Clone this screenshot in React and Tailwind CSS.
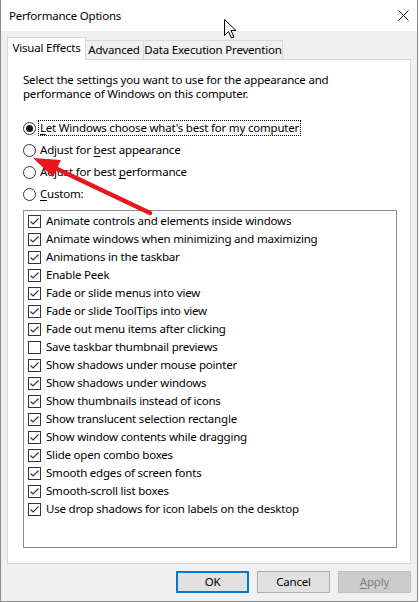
import React from "react";

const FONT = { fontFamily: '"Noto Sans", "Open Sans", sans-serif' };

const items = [
  "Animate controls and elements inside windows",
  "Animate windows when minimizing and maximizing",
  "Animations in the taskbar",
  "Enable Peek",
  "Fade or slide menus into view",
  "Fade or slide ToolTips into view",
  "Fade out menu items after clicking",
  "Save taskbar thumbnail previews",
  "Show shadows under mouse pointer",
  "Show shadows under windows",
  "Show thumbnails instead of icons",
  "Show translucent selection rectangle",
  "Show window contents while dragging",
  "Slide open combo boxes",
  "Smooth edges of screen fonts",
  "Smooth-scroll list boxes",
  "Use drop shadows for icon labels on the desktop",
];
const unchecked = new Set(["Save taskbar thumbnail previews"]);

function Radio({ checked, focused, children }) {
  return (
    <div className="flex items-center h-[22px]">
      <div className="w-[13px] h-[13px] rounded-full border border-[#333333] bg-white flex items-center justify-center shrink-0">
        {checked && <div className="w-[7px] h-[7px] rounded-full bg-[#1a1a1a]" />}
      </div>
      <span
        className={
          "ml-[2px] h-[16px] flex items-center pl-[1px] pr-[1px] border whitespace-nowrap " +
          (focused ? "border-dotted border-[#000000]" : "border-transparent")
        }
      >
        {children}
      </span>
    </div>
  );
}

function Check({ checked, label }) {
  return (
    <div className="flex items-center h-[18px]">
      <div className="w-[13px] h-[13px] border border-[#333333] bg-white shrink-0 flex items-center justify-center">
        {checked && (
          <svg width="11" height="11" viewBox="0 0 11 11">
            <path d="M1.5 5.5 L4 8 L9.5 2.5" fill="none" stroke="#333333" strokeWidth="1.1" />
          </svg>
        )}
      </div>
      <span className="ml-[5px] whitespace-nowrap">{label}</span>
    </div>
  );
}

export default function App() {
  return (
    <div
      className="relative w-[418px] h-[602px] bg-[#f0f0f0] border-l border-r border-b border-[#8a8a8a] flex flex-col text-[11.5px] tracking-[-0.2px] text-black overflow-hidden"
      style={FONT}
    >
      {/* Title bar */}
      <div className="h-[31px] bg-white flex items-center shrink-0">
        <span className="pl-[8px] text-[11.5px] text-[#000000]">Performance Options</span>
        <svg className="ml-auto mr-[8px]" width="11" height="11" viewBox="0 0 11 11">
          <path d="M0.5 0.5 L10.5 10.5 M10.5 0.5 L0.5 10.5" stroke="#111111" strokeWidth="1" />
        </svg>
      </div>

      {/* Tabs + panel */}
      <div className="pl-[6px] pt-[6px]">
        <div className="flex items-end h-[22px]">
          <div className="relative z-10 w-[79px] h-[23px] mb-[-1px] bg-white border-l border-t border-r border-[#d9d9d9] flex items-center justify-center pb-[2px] whitespace-nowrap">
            Visual Effects
          </div>
          <div className="w-[59px] h-[19px] -ml-[1px] bg-[#f0f0f0] border-t border-r border-[#d9d9d9] flex items-center justify-center whitespace-nowrap">
            Advanced
          </div>
          <div className="w-[139px] h-[19px] bg-[#f0f0f0] border-t border-r border-[#d9d9d9] flex items-center justify-center whitespace-nowrap">
            Data Execution Prevention
          </div>
        </div>
        <div className="w-[404px] h-[505px] bg-white border border-[#d9d9d9] pl-[15px] pt-[13px] flex flex-col">
          <p className="leading-[14px] w-[370px]">
            Select the settings you want to use for the appearance and performance of Windows on this computer.
          </p>
          <div className="mt-[16px] flex flex-col">
            <Radio checked focused>
              <span><u className="underline-offset-2">L</u>et Windows choose what's best for my computer</span>
            </Radio>
            <Radio>
              <span>Adjust for <u className="underline-offset-2">b</u>est appearance</span>
            </Radio>
            <Radio>
              <span>Adjust for best <u className="underline-offset-2">p</u>erformance</span>
            </Radio>
            <Radio>
              <span><u className="underline-offset-2">C</u>ustom:</span>
            </Radio>
          </div>
          <div className="mt-[5px] w-[374px] h-[338px] border border-[#8c8c8c] pl-[4px] pt-[1px] flex flex-col">
            {items.map((t) => (
              <Check key={t} label={t} checked={!unchecked.has(t)} />
            ))}
          </div>
        </div>
      </div>

      {/* Buttons */}
      <div className="flex justify-end gap-[8px] pr-[6px] mt-[7px]">
        <button className="w-[73px] h-[22px] bg-[#e1e1e1] border-2 border-[#0078d7] flex items-center justify-center">
          OK
        </button>
        <button className="w-[73px] h-[22px] bg-[#e1e1e1] border border-[#adadad] flex items-center justify-center">
          Cancel
        </button>
        <button className="w-[73px] h-[22px] bg-[#cccccc] border border-[#bfbfbf] text-[#838383] flex items-center justify-center">
          <span><u className="underline-offset-2">A</u>pply</span>
        </button>
      </div>

      {/* Overlay: red arrow and mouse cursor */}
      <svg className="absolute left-[-1px] top-0 pointer-events-none" width="419" height="602" viewBox="0 0 419 602">
        <line x1="53" y1="167" x2="150" y2="213" stroke="#e8161e" strokeWidth="4.5" strokeLinecap="round" />
        <polygon points="33,158 61,160 53,177" fill="#e8161e" />
        <path
          d="M224.5 19.5 L224.5 35.5 L228.5 31.5 L231.5 38 L234 37 L231 30.5 L236 30.5 Z"
          fill="#ffffff"
          stroke="#000000"
          strokeWidth="1"
          strokeLinejoin="miter"
        />
      </svg>
    </div>
  );
}
